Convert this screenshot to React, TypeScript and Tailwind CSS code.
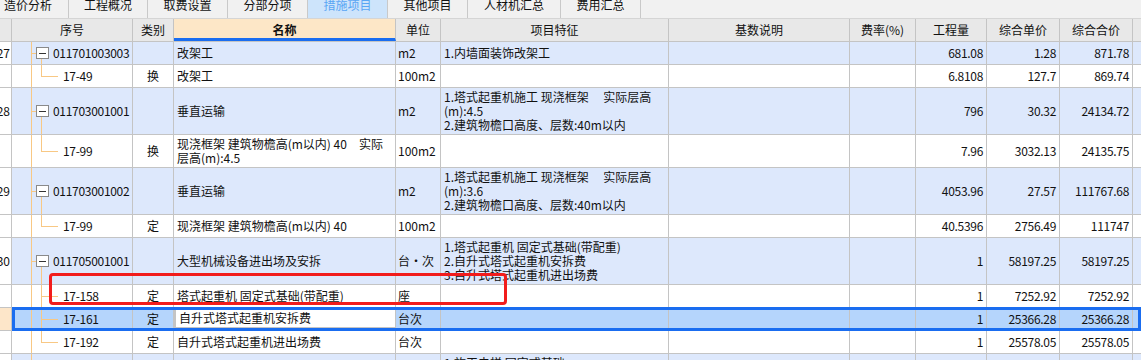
const font = { fontFamily: '"Noto Sans CJK SC", "Noto Sans", sans-serif' };

const tabs = [
  { label: '造价分析', w: 'w-[81px] -ml-[12px]' },
  { label: '工程概况', w: 'w-[79px]' },
  { label: '取费设置', w: 'w-[80px]' },
  { label: '分部分项', w: 'w-[80px]' },
  { label: '措施项目', w: 'w-[80px]', active: true },
  { label: '其他项目', w: 'w-[80px]' },
  { label: '人材机汇总', w: 'w-[93px]' },
  { label: '费用汇总', w: 'w-[80px]' },
];

type Row = {
  h: string;
  rn?: string;
  kind: 'parent' | 'child' | 'last';
  code: string;
  type?: string;
  name: string[];
  unit?: string;
  feat?: string[];
  qty?: string;
  price?: string;
  total?: string;
  blue?: boolean;
  selected?: boolean;
};

const rows: Row[] = [
  { h: 'h-[23px]', rn: '27', kind: 'parent', code: '011701003003', name: ['改架工'], unit: 'm2', feat: ['1.内墙面装饰改架工'], qty: '681.08', price: '1.28', total: '871.78', blue: true },
  { h: 'h-[23px]', kind: 'last', code: '17-49', type: '换', name: ['改架工'], unit: '100m2', qty: '6.8108', price: '127.7', total: '869.74' },
  { h: 'h-[47px]', rn: '28', kind: 'parent', code: '011703001001', name: ['垂直运输'], unit: 'm2', feat: ['1.塔式起重机施工 现浇框架　 实际层高', '(m):4.5', '2.建筑物檐口高度、层数:40m以内'], qty: '796', price: '30.32', total: '24134.72', blue: true },
  { h: 'h-[33px]', kind: 'last', code: '17-99', type: '换', name: ['现浇框架 建筑物檐高(m以内) 40　实际', '层高(m):4.5'], unit: '100m2', qty: '7.96', price: '3032.13', total: '24135.75' },
  { h: 'h-[47px]', rn: '29', kind: 'parent', code: '011703001002', name: ['垂直运输'], unit: 'm2', feat: ['1.塔式起重机施工 现浇框架　 实际层高', '(m):3.6', '2.建筑物檐口高度、层数:40m以内'], qty: '4053.96', price: '27.57', total: '111767.68', blue: true },
  { h: 'h-[23px]', kind: 'last', code: '17-99', type: '定', name: ['现浇框架 建筑物檐高(m以内) 40'], unit: '100m2', qty: '40.5396', price: '2756.49', total: '111747' },
  { h: 'h-[47px]', rn: '30', kind: 'parent', code: '011705001001', name: ['大型机械设备进出场及安拆'], unit: '台·次', feat: ['1.塔式起重机 固定式基础(带配重)', '2.自升式塔式起重机安拆费', '3.自升式塔式起重机进出场费'], qty: '1', price: '58197.25', total: '58197.25', blue: true },
  { h: 'h-[23px]', kind: 'child', code: '17-158', type: '定', name: ['塔式起重机 固定式基础(带配重)'], unit: '座', qty: '1', price: '7252.92', total: '7252.92' },
  { h: 'h-[23px]', kind: 'child', code: '17-161', type: '定', name: ['自升式塔式起重机安拆费'], unit: '台次', qty: '1', price: '25366.28', total: '25366.28', selected: true },
  { h: 'h-[23px]', kind: 'last', code: '17-192', type: '定', name: ['自升式塔式起重机进出场费'], unit: '台次', qty: '1', price: '25578.05', total: '25578.05' },
  { h: 'h-[47px]', rn: '31', kind: 'parent', code: '011705001002', name: ['大型机械设备进出场及安拆'], unit: '台·次', feat: ['1.施工电梯 固定式基础', '2.施工电梯安拆费', '3.施工电梯进出场费'], qty: '1', price: '', total: '', blue: true },
];

const cell = 'shrink-0 h-full border-r border-[#c4c4c4] flex items-center overflow-hidden';
const line = 'bg-[#f8c884]';

function Num({ v, w }: { v?: string; w: string }) {
  return <div className={`${cell} ${w} justify-end pr-[3px] tracking-[-0.3px]`}>{v}</div>;
}

function Tree({ r }: { r: Row }) {
  return (
    <>
      <div className={`absolute left-[19px] top-0 -bottom-px w-px ${line}`} />
      {r.kind === 'parent' ? (
        <>
          <div className={`absolute left-[19px] top-1/2 w-[5px] h-px ${line}`} />
          <div className={`absolute left-[29px] top-1/2 -bottom-px w-px ${line}`} />
          <div className="absolute left-[24px] top-1/2 -translate-y-1/2 w-[13px] h-[12px] border border-[#8a8a8a] bg-white flex items-center justify-center">
            <div className="w-[7px] h-px bg-[#333]" />
          </div>
          <span className="absolute left-[41px] top-1/2 -translate-y-1/2 tracking-[-0.3px]">{r.code}</span>
        </>
      ) : (
        <>
          <div className={`absolute left-[29px] top-0 w-px ${line} ${r.kind === 'last' ? 'h-1/2' : '-bottom-px'}`} />
          <div className={`absolute left-[29px] top-1/2 w-[17px] h-px ${line}`} />
          <span className="absolute left-[51px] top-1/2 -translate-y-1/2 tracking-[-0.3px]">{r.code}</span>
        </>
      )}
    </>
  );
}

function DataRow({ r }: { r: Row }) {
  const bg = r.selected ? 'bg-[#b5d5fc]' : r.blue ? 'bg-[#dde8fc]' : 'bg-white';
  return (
    <div className={`relative flex shrink-0 border-b border-[#c4c4c4] ${r.h}`}>
      <div className={`${cell} w-[12px] justify-end pr-px ${r.selected ? 'bg-[#fde6c9]' : 'bg-white'}`}>
        <span className="shrink-0">{r.rn}</span>
      </div>
      <div className={`flex flex-1 h-full ${bg}`}>
        <div className={`${cell} relative w-[121px]`}>
          <Tree r={r} />
        </div>
        <div className={`${cell} w-[41px] justify-center`}>{r.type}</div>
        <div
          className={`${cell} w-[222px] pl-[3px] ${
            r.selected ? 'bg-white border-2 border-[#1a6df0] -mt-px h-[calc(100%+1px)] pl-[2px]' : ''
          }`}
        >
          <div className="leading-[14px]">
            {r.name.map((t, i) => (
              <div key={i} className="whitespace-pre">{t}</div>
            ))}
          </div>
        </div>
        <div className={`${cell} w-[45px] pl-[2px] whitespace-nowrap`}>{r.unit}</div>
        <div className={`${cell} w-[228px] pl-[3px]`}>
          <div className="leading-[14px]">
            {(r.feat || []).map((t, i) => (
              <div key={i} className="whitespace-pre">{t}</div>
            ))}
          </div>
        </div>
        <div className={`${cell} w-[181px]`} />
        <div className={`${cell} w-[66px]`} />
        <Num v={r.qty} w="w-[71px]" />
        <Num v={r.price} w="w-[73px]" />
        <Num v={r.total} w="w-[73px]" />
        <div className="flex-1 h-full" />
      </div>
      {r.selected && (
        <div className="absolute left-[12px] right-0 -top-px -bottom-px border-[3px] border-[#1a6df0] pointer-events-none" />
      )}
    </div>
  );
}

export default function App() {
  const head = 'shrink-0 h-full border-r border-[#c4c4c4] flex items-center justify-center';
  return (
    <div className="relative w-full h-[360px] overflow-hidden bg-white text-[12px] text-[#111]" style={font}>
      {/* tabs */}
      <div className="flex h-[19px] bg-[#f1f1f1] border-b border-[#d5d5d5]">
        {tabs.map((t) => (
          <div
            key={t.label}
            className={`${t.w} shrink-0 h-full flex justify-center border-r border-[#c9c9c9] text-[12px] leading-[12px] ${
              t.active ? 'bg-[#cde4fb] text-[#5aa6f4]' : 'text-[#111]'
            }`}
          >
            <span className="-mt-px">{t.label}</span>
          </div>
        ))}
      </div>

      {/* header */}
      <div className="flex h-[23px] bg-[#e8e8e8] border-b border-[#c4c4c4]">
        <div className={`${head} w-[12px]`} />
        <div className={`${head} w-[121px]`}>序号</div>
        <div className={`${head} w-[41px]`}>类别</div>
        <div className={`${head} w-[222px] bg-[#fde7c7] font-bold border-b-[3px] border-b-[#1a6df0] pt-[2px]`}>名称</div>
        <div className={`${head} w-[45px]`}>单位</div>
        <div className={`${head} w-[228px]`}>项目特征</div>
        <div className={`${head} w-[181px]`}>基数说明</div>
        <div className={`${head} w-[66px]`}>费率(%)</div>
        <div className={`${head} w-[71px]`}>工程量</div>
        <div className={`${head} w-[73px]`}>综合单价</div>
        <div className={`${head} w-[73px]`}>综合合价</div>
        <div className="flex-1" />
      </div>

      {rows.map((r, i) => (
        <DataRow key={i} r={r} />
      ))}

      {/* annotation box */}
      <div className="absolute left-[49px] top-[273px] w-[458px] h-[32px] border-[3px] border-[#f21c1c] rounded-[4px] pointer-events-none" />
    </div>
  );
}
